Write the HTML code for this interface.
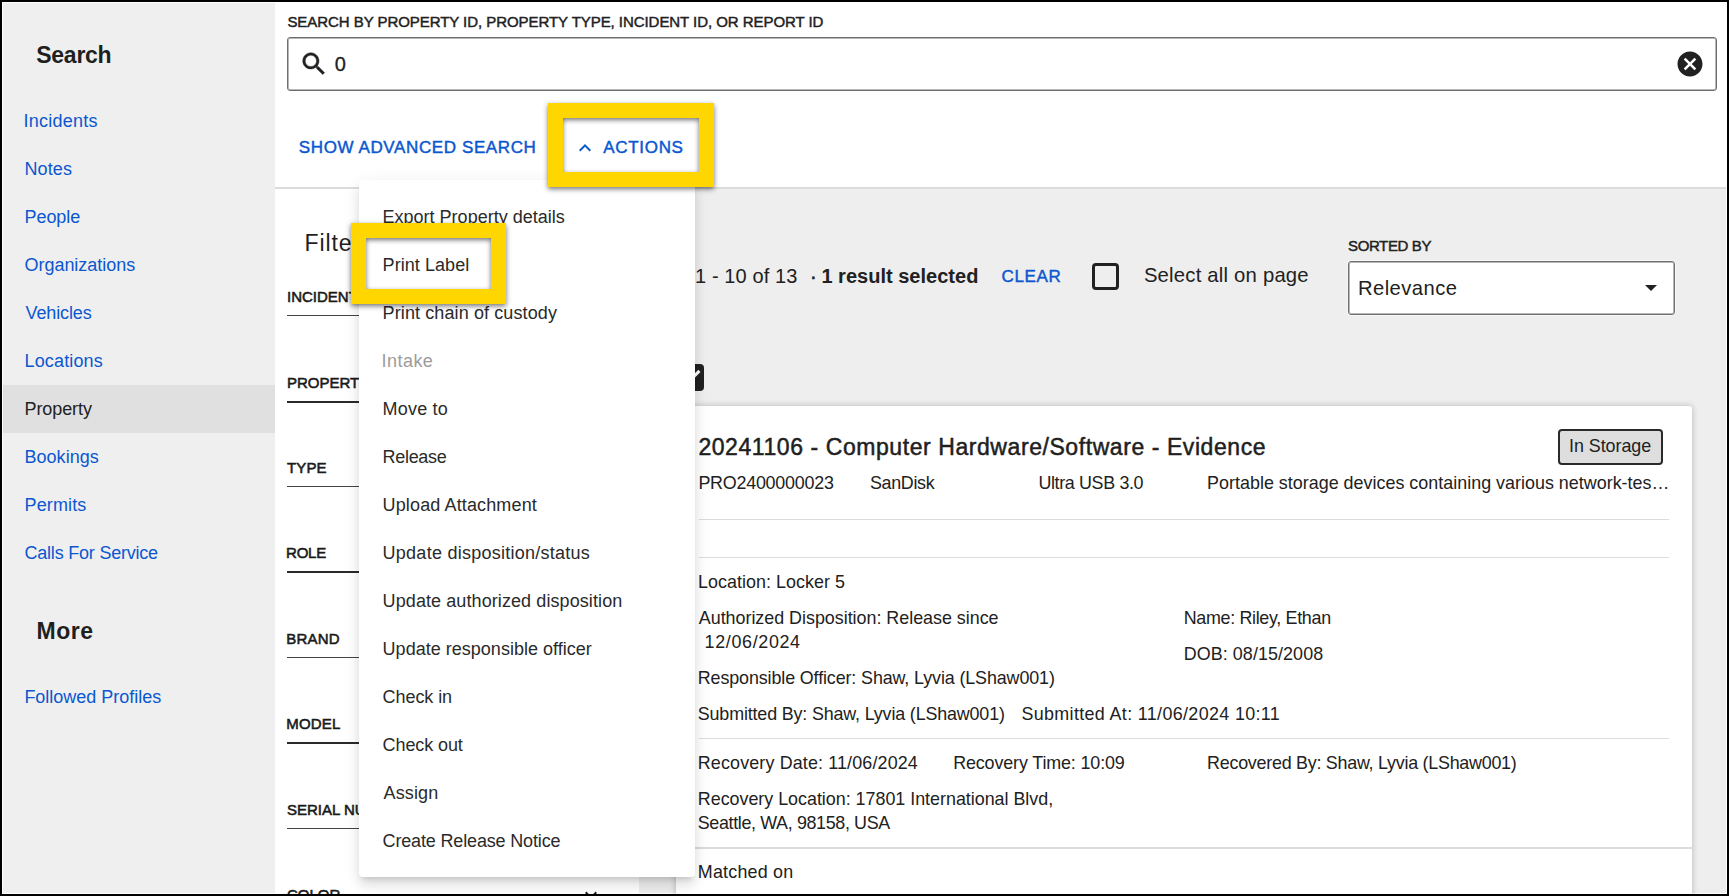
<!DOCTYPE html>
<html><head><meta charset="utf-8"><style>
html,body{margin:0;padding:0;width:1729px;height:896px;overflow:hidden;background:#000;}
#frame{position:absolute;left:2px;top:2px;width:1725px;height:892px;background:#fff;overflow:hidden;}
.t{position:absolute;white-space:nowrap;line-height:1;font-family:"Liberation Sans",sans-serif;color:#212121;}
.r{position:absolute;}
</style></head><body><div id="frame"><div style="position:absolute;left:-2px;top:-2px;width:1729px;height:896px;">
<div class="r" style="left:3px;top:3px;width:272px;height:890px;background:#efefef"></div>
<div class="t" style="left:36.30px;top:43.82px;font-size:23px;font-weight:700;color:#1f1f1f;letter-spacing:-0.280px;">Search</div>
<div class="r" style="left:3px;top:385px;width:272px;height:48px;background:#e0e0e0"></div>
<div class="t" style="left:23.50px;top:111.76px;font-size:18px;color:#0b57d0;letter-spacing:0.238px;">Incidents</div>
<div class="t" style="left:24.50px;top:159.76px;font-size:18px;color:#0b57d0;letter-spacing:0.100px;">Notes</div>
<div class="t" style="left:24.50px;top:207.76px;font-size:18px;color:#0b57d0;letter-spacing:-0.060px;">People</div>
<div class="t" style="left:24.50px;top:255.76px;font-size:18px;color:#0b57d0;letter-spacing:-0.033px;">Organizations</div>
<div class="t" style="left:25.50px;top:303.76px;font-size:18px;color:#0b57d0;letter-spacing:-0.114px;">Vehicles</div>
<div class="t" style="left:24.50px;top:351.76px;font-size:18px;color:#0b57d0;letter-spacing:0.150px;">Locations</div>
<div class="t" style="left:24.50px;top:399.76px;font-size:18px;letter-spacing:-0.086px;">Property</div>
<div class="t" style="left:24.50px;top:447.76px;font-size:18px;color:#0b57d0;letter-spacing:0.029px;">Bookings</div>
<div class="t" style="left:24.50px;top:495.76px;font-size:18px;color:#0b57d0;letter-spacing:0.133px;">Permits</div>
<div class="t" style="left:24.50px;top:543.76px;font-size:18px;color:#0b57d0;letter-spacing:-0.213px;">Calls For Service</div>
<div class="t" style="left:36.50px;top:619.52px;font-size:23px;font-weight:700;color:#1f1f1f;letter-spacing:0.500px;">More</div>
<div class="t" style="left:24.40px;top:687.56px;font-size:18px;color:#0b57d0;letter-spacing:-0.013px;">Followed Profiles</div>
<div class="r" style="left:275px;top:3px;width:1451px;height:184px;background:#fff"></div>
<div class="t" style="left:287.40px;top:14.30px;font-size:15px;letter-spacing:-0.053px;-webkit-text-stroke:0.45px #212121;">SEARCH BY PROPERTY ID, PROPERTY TYPE, INCIDENT ID, OR REPORT ID</div>
<div class="r" style="left:287px;top:37px;width:1430px;height:54px;background:#fff;border:1px solid #6f6f6f;box-shadow:inset 0 0 0 1px rgba(111,111,111,.5);border-radius:3px;box-sizing:border-box"></div>
<svg class="r" style="left:299px;top:48.9px" width="30" height="30" viewBox="0 0 24 24"><path fill="#212121" stroke="#212121" stroke-width="0.35" d="M15.5 14h-.79l-.28-.27C15.41 12.59 16 11.11 16 9.5 16 5.91 13.09 3 9.5 3S3 5.91 3 9.5 5.91 16 9.5 16c1.61 0 3.09-.59 4.23-1.57l.27.28v.79l5 4.99L20.49 19l-4.99-5zm-6 0C7.01 14 5 11.99 5 9.5S7.01 5 9.5 5 14 7.01 14 9.5 11.99 14 9.5 14z"/></svg>
<div class="t" style="left:334.70px;top:53.76px;font-size:20px;letter-spacing:0.600px;-webkit-text-stroke:0.3px #212121;">0</div>
<svg class="r" style="left:1675px;top:48.7px" width="30" height="30" viewBox="0 0 24 24"><path fill="#212121" d="M12 2C6.47 2 2 6.47 2 12s4.47 10 10 10 10-4.47 10-10S17.53 2 12 2zm5 13.59L15.59 17 12 13.41 8.41 17 7 15.59 10.59 12 7 8.41 8.41 7 12 10.59 15.59 7 17 8.41 13.41 12 17 15.59z"/></svg>
<div class="t" style="left:298.80px;top:139.40px;font-size:17px;color:#0b57d0;letter-spacing:0.611px;-webkit-text-stroke:0.45px #0b57d0;">SHOW ADVANCED SEARCH</div>
<svg class="r" style="left:573.3px;top:136px" width="24" height="24" viewBox="0 0 24 24"><path fill="#0b57d0" d="M12 8l-6 6 1.41 1.41L12 10.83l4.59 4.58L18 14z"/></svg>
<div class="t" style="left:603.30px;top:139.40px;font-size:17px;color:#0b57d0;letter-spacing:0.683px;-webkit-text-stroke:0.45px #0b57d0;">ACTIONS</div>
<div class="r" style="left:275px;top:187px;width:1451px;height:2px;background:#dcdcdc"></div>
<div class="r" style="left:275px;top:189px;width:364px;height:704px;background:#fff"></div>
<div class="r" style="left:639px;top:189px;width:1087px;height:704px;background:#eeeeee"></div>
<div class="t" style="left:304.50px;top:232.22px;font-size:23px;color:#1f1f1f;letter-spacing:0.900px;">Filters</div>
<div class="t" style="left:287.00px;top:289.10px;font-size:15px;color:#1a1a1a;letter-spacing:0.000px;-webkit-text-stroke:0.55px #1a1a1a;">INCIDENT ID</div>
<div class="r" style="left:287px;top:315px;width:340px;height:1px;background:#444"></div>
<svg class="r" style="left:579px;top:285px" width="24" height="24" viewBox="0 0 24 24"><path fill="#212121" d="M16.59 8.59L12 13.17 7.41 8.59 6 10l6 6 6-6z"/></svg>
<div class="t" style="left:287.00px;top:374.50px;font-size:15px;color:#1a1a1a;letter-spacing:0.000px;-webkit-text-stroke:0.55px #1a1a1a;">PROPERTY ID</div>
<div class="r" style="left:287px;top:401px;width:340px;height:2px;background:#2a2a2a"></div>
<svg class="r" style="left:579px;top:370px" width="24" height="24" viewBox="0 0 24 24"><path fill="#212121" d="M16.59 8.59L12 13.17 7.41 8.59 6 10l6 6 6-6z"/></svg>
<div class="t" style="left:287.10px;top:459.90px;font-size:15px;color:#1a1a1a;letter-spacing:0.067px;-webkit-text-stroke:0.55px #1a1a1a;">TYPE</div>
<div class="r" style="left:287px;top:486px;width:340px;height:1px;background:#444"></div>
<svg class="r" style="left:579px;top:456px" width="24" height="24" viewBox="0 0 24 24"><path fill="#212121" d="M16.59 8.59L12 13.17 7.41 8.59 6 10l6 6 6-6z"/></svg>
<div class="t" style="left:286.10px;top:545.30px;font-size:15px;color:#1a1a1a;letter-spacing:-0.267px;-webkit-text-stroke:0.55px #1a1a1a;">ROLE</div>
<div class="r" style="left:287px;top:571px;width:340px;height:2px;background:#2a2a2a"></div>
<svg class="r" style="left:579px;top:541px" width="24" height="24" viewBox="0 0 24 24"><path fill="#212121" d="M16.59 8.59L12 13.17 7.41 8.59 6 10l6 6 6-6z"/></svg>
<div class="t" style="left:286.30px;top:630.70px;font-size:15px;color:#1a1a1a;letter-spacing:0.225px;-webkit-text-stroke:0.55px #1a1a1a;">BRAND</div>
<div class="r" style="left:287px;top:657px;width:340px;height:1px;background:#444"></div>
<svg class="r" style="left:579px;top:626px" width="24" height="24" viewBox="0 0 24 24"><path fill="#212121" d="M16.59 8.59L12 13.17 7.41 8.59 6 10l6 6 6-6z"/></svg>
<div class="t" style="left:286.30px;top:716.10px;font-size:15px;color:#1a1a1a;letter-spacing:0.150px;-webkit-text-stroke:0.55px #1a1a1a;">MODEL</div>
<div class="r" style="left:287px;top:742px;width:340px;height:2px;background:#2a2a2a"></div>
<svg class="r" style="left:579px;top:712px" width="24" height="24" viewBox="0 0 24 24"><path fill="#212121" d="M16.59 8.59L12 13.17 7.41 8.59 6 10l6 6 6-6z"/></svg>
<div class="t" style="left:287.00px;top:801.50px;font-size:15px;color:#1a1a1a;letter-spacing:0.000px;-webkit-text-stroke:0.55px #1a1a1a;">SERIAL NUMBER</div>
<div class="r" style="left:287px;top:828px;width:340px;height:1px;background:#444"></div>
<svg class="r" style="left:579px;top:797px" width="24" height="24" viewBox="0 0 24 24"><path fill="#212121" d="M16.59 8.59L12 13.17 7.41 8.59 6 10l6 6 6-6z"/></svg>
<div class="t" style="left:287.00px;top:886.90px;font-size:15px;color:#1a1a1a;letter-spacing:0.000px;-webkit-text-stroke:0.55px #1a1a1a;">COLOR</div>
<div class="r" style="left:287px;top:913px;width:340px;height:2px;background:#2a2a2a"></div>
<svg class="r" style="left:579px;top:883px" width="24" height="24" viewBox="0 0 24 24"><path fill="#212121" d="M16.59 8.59L12 13.17 7.41 8.59 6 10l6 6 6-6z"/></svg>
<div class="t" style="left:695.00px;top:266.26px;font-size:20px;letter-spacing:0.118px;">1 - 10 of 13</div>
<div class="t" style="left:810.00px;top:266.26px;font-size:20px;-webkit-text-stroke:0.6px #212121;">·</div>
<div class="t" style="left:821.40px;top:266.26px;font-size:20px;font-weight:700;letter-spacing:0.013px;">1 result selected</div>
<div class="t" style="left:1001.60px;top:267.60px;font-size:17px;color:#0b57d0;letter-spacing:0.600px;-webkit-text-stroke:0.45px #0b57d0;">CLEAR</div>
<div class="r" style="left:1091.5px;top:262.5px;width:27.0px;height:27.0px;border:3px solid #212121;border-radius:4px;box-sizing:border-box"></div>
<div class="t" style="left:1143.90px;top:265.31px;font-size:20.3px;letter-spacing:0.206px;">Select all on page</div>
<div class="t" style="left:1348.00px;top:238.20px;font-size:15px;letter-spacing:-0.375px;-webkit-text-stroke:0.45px #212121;">SORTED BY</div>
<div class="r" style="left:1348px;top:261px;width:327px;height:53.5px;background:#fff;border:1px solid #707070;box-shadow:inset 0 0 0 1px rgba(112,112,112,.5),0 0 0 1px rgba(255,255,255,.5);border-radius:3px;box-sizing:border-box"></div>
<div class="t" style="left:1358.00px;top:277.69px;font-size:20.2px;letter-spacing:0.438px;">Relevance</div>
<svg class="r" style="left:1645px;top:284px" width="12" height="8" viewBox="0 0 10 5"><path fill="#212121" d="M0 0l5 5 5-5z"/></svg>
<div class="r" style="left:676.5px;top:364.3px;width:27px;height:27px;background:#212121;border-radius:4px;overflow:hidden"><svg width="36" height="36" viewBox="0 0 24 24" style="position:absolute;left:-4.5px;top:-4.5px"><path fill="#fff" d="M10 17l-5-5 1.41-1.41L10 14.17l7.59-7.59L19 8l-9 9z"/></svg></div>
<div class="r" style="left:676px;top:405.5px;width:1016px;height:514.5px;background:#fff;border-radius:3px;box-shadow:0 0 6px rgba(0,0,0,.24)"></div>
<div class="t" style="left:698.40px;top:436.22px;font-size:23px;color:#1f1f1f;letter-spacing:0.570px;-webkit-text-stroke:0.5px #1f1f1f;">20241106 - Computer Hardware/Software - Evidence</div>
<div class="r" style="left:1558px;top:429px;width:105px;height:36px;background:#dedede;border:2px solid #2a2a2a;border-radius:4px;box-sizing:border-box"></div>
<div class="t" style="left:1569.00px;top:438.34px;font-size:17.9px;letter-spacing:-0.044px;">In Storage</div>
<div class="t" style="left:698.40px;top:474.64px;font-size:17.9px;letter-spacing:-0.233px;">PRO2400000023</div>
<div class="t" style="left:870.00px;top:474.64px;font-size:17.9px;letter-spacing:-0.333px;">SanDisk</div>
<div class="t" style="left:1038.40px;top:474.64px;font-size:17.9px;letter-spacing:-0.350px;">Ultra USB 3.0</div>
<div class="t" style="left:1207.10px;top:474.64px;font-size:17.9px;letter-spacing:0.016px;">Portable storage devices containing various network-tes…</div>
<div class="r" style="left:699px;top:519px;width:970px;height:1px;background:#dcdcdc"></div>
<div class="r" style="left:699px;top:556.5px;width:970px;height:1.5px;background:#dcdcdc"></div>
<div class="t" style="left:698.00px;top:573.94px;font-size:17.9px;letter-spacing:0.047px;">Location: Locker 5</div>
<div class="t" style="left:698.80px;top:609.94px;font-size:17.9px;letter-spacing:-0.017px;">Authorized Disposition: Release since</div>
<div class="t" style="left:704.60px;top:633.84px;font-size:17.9px;letter-spacing:0.656px;">12/06/2024</div>
<div class="t" style="left:1183.70px;top:610.04px;font-size:17.9px;letter-spacing:-0.318px;">Name: Riley, Ethan</div>
<div class="t" style="left:1183.70px;top:645.84px;font-size:17.9px;letter-spacing:0.086px;">DOB: 08/15/2008</div>
<div class="t" style="left:697.80px;top:669.74px;font-size:17.9px;letter-spacing:-0.117px;">Responsible Officer: Shaw, Lyvia (LShaw001)</div>
<div class="t" style="left:697.80px;top:705.54px;font-size:17.9px;letter-spacing:-0.157px;">Submitted By: Shaw, Lyvia (LShaw001)</div>
<div class="t" style="left:1021.40px;top:705.54px;font-size:17.9px;letter-spacing:0.359px;">Submitted At: 11/06/2024 10:11</div>
<div class="r" style="left:699px;top:738px;width:970px;height:1px;background:#dcdcdc"></div>
<div class="t" style="left:697.80px;top:755.04px;font-size:17.9px;letter-spacing:0.146px;">Recovery Date: 11/06/2024</div>
<div class="t" style="left:953.20px;top:755.04px;font-size:17.9px;letter-spacing:-0.126px;">Recovery Time: 10:09</div>
<div class="t" style="left:1207.10px;top:755.14px;font-size:17.9px;letter-spacing:-0.254px;">Recovered By: Shaw, Lyvia (LShaw001)</div>
<div class="t" style="left:697.80px;top:790.94px;font-size:17.9px;letter-spacing:-0.016px;">Recovery Location: 17801 International Blvd,</div>
<div class="t" style="left:697.80px;top:814.84px;font-size:17.9px;letter-spacing:-0.355px;">Seattle, WA, 98158, USA</div>
<div class="r" style="left:676px;top:847px;width:1016px;height:2px;background:#dcdcdc"></div>
<div class="t" style="left:697.80px;top:864.34px;font-size:17.9px;letter-spacing:0.211px;">Matched on</div>
<div class="r" style="left:359px;top:180px;width:336px;height:697px;background:#fff;border-radius:4px;box-shadow:0 5px 5px -3px rgba(0,0,0,.12),0 9px 12px 0px rgba(0,0,0,.09),0 3px 18px 0px rgba(0,0,0,.07)"></div>
<div class="t" style="left:382.60px;top:208.26px;font-size:18px;color:#2a2a2a;letter-spacing:0.000px;">Export Property details</div>
<div class="t" style="left:382.60px;top:256.26px;font-size:18px;color:#2a2a2a;letter-spacing:0.060px;">Print Label</div>
<div class="t" style="left:382.60px;top:304.26px;font-size:18px;color:#2a2a2a;letter-spacing:0.105px;">Print chain of custody</div>
<div class="t" style="left:381.60px;top:352.26px;font-size:18px;color:#9c9c9c;letter-spacing:0.440px;">Intake</div>
<div class="t" style="left:382.60px;top:400.26px;font-size:18px;color:#2a2a2a;letter-spacing:0.200px;">Move to</div>
<div class="t" style="left:382.60px;top:448.26px;font-size:18px;color:#2a2a2a;letter-spacing:-0.317px;">Release</div>
<div class="t" style="left:382.60px;top:496.26px;font-size:18px;color:#2a2a2a;letter-spacing:0.131px;">Upload Attachment</div>
<div class="t" style="left:382.60px;top:544.26px;font-size:18px;color:#2a2a2a;letter-spacing:0.250px;">Update disposition/status</div>
<div class="t" style="left:382.60px;top:592.26px;font-size:18px;color:#2a2a2a;letter-spacing:0.089px;">Update authorized disposition</div>
<div class="t" style="left:382.60px;top:640.26px;font-size:18px;color:#2a2a2a;letter-spacing:0.016px;">Update responsible officer</div>
<div class="t" style="left:382.60px;top:688.26px;font-size:18px;color:#2a2a2a;letter-spacing:-0.071px;">Check in</div>
<div class="t" style="left:382.60px;top:736.26px;font-size:18px;color:#2a2a2a;letter-spacing:-0.100px;">Check out</div>
<div class="t" style="left:383.60px;top:784.26px;font-size:18px;color:#2a2a2a;letter-spacing:0.120px;">Assign</div>
<div class="t" style="left:382.60px;top:832.26px;font-size:18px;color:#2a2a2a;letter-spacing:-0.160px;">Create Release Notice</div>
<div class="r" style="left:548px;top:103px;width:166px;height:84px;border:15px solid #ffd600;box-sizing:border-box;box-shadow:0 2px 5px rgba(0,0,0,.55), inset 0 2px 5px rgba(0,0,0,.55)"></div>
<div class="r" style="left:351px;top:223px;width:155px;height:81px;border:15px solid #ffd600;box-sizing:border-box;box-shadow:0 2px 5px rgba(0,0,0,.55), inset 0 2px 5px rgba(0,0,0,.55)"></div>
</div></div></body></html>
